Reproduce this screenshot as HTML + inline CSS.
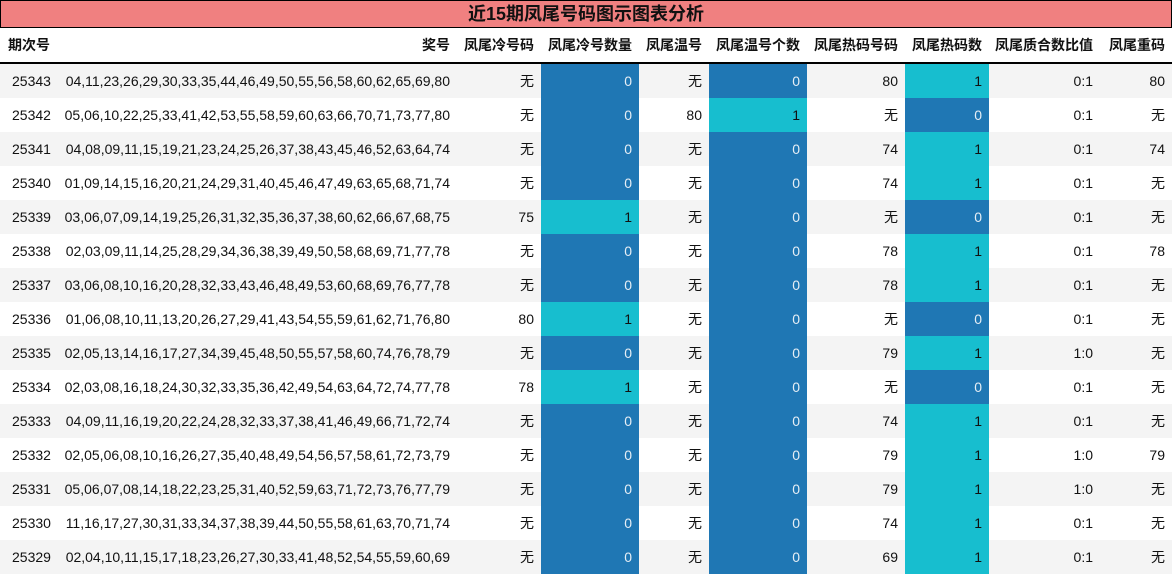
<!DOCTYPE html>
<html><head><meta charset="utf-8">
<style>
html,body{margin:0;padding:0;background:#fff;width:1172px;height:575px;overflow:hidden;}
body{font-family:"Liberation Sans","Noto Sans CJK SC",sans-serif;font-size:14px;color:#111;}
.title{box-sizing:border-box;height:28px;background:#f08080;border:1px solid #000;text-align:center;font-weight:bold;font-size:18px;line-height:26px;}
table{border-collapse:collapse;table-layout:fixed;width:1172px;}
th{height:34px;font-weight:bold;text-align:right;padding:0 7px 0 0;border-bottom:2px solid #000;white-space:nowrap;}
th:first-child{text-align:left;padding-left:8px;}
td{height:34px;padding:0 7px 0 0;text-align:right;white-space:nowrap;}
td:first-child{text-align:left;padding-left:12px;}
td:nth-child(2),th:nth-child(2){padding-right:6px;}
tr:nth-child(odd) td{background:#f4f4f4;}
tr td.b{background:#1f77b4 !important;color:#e6eef5;}
tr td.c{background:#17becf !important;color:#111;}
</style></head><body>
<div class="title">近15期凤尾号码图示图表分析</div>
<table>
<colgroup><col style="width:58px"><col style="width:398px"><col style="width:85px"><col style="width:98px"><col style="width:70px"><col style="width:98px"><col style="width:98px"><col style="width:84px"><col style="width:111px"><col style="width:72px"></colgroup>
<thead><tr><th>期次号</th><th>奖号</th><th>凤尾冷号码</th><th>凤尾冷号数量</th><th>凤尾温号</th><th>凤尾温号个数</th><th>凤尾热码号码</th><th>凤尾热码数</th><th>凤尾质合数比值</th><th>凤尾重码</th></tr></thead>
<tbody>
<tr><td>25343</td><td>04,11,23,26,29,30,33,35,44,46,49,50,55,56,58,60,62,65,69,80</td><td>无</td><td class="b">0</td><td>无</td><td class="b">0</td><td>80</td><td class="c">1</td><td>0:1</td><td>80</td></tr>
<tr><td>25342</td><td>05,06,10,22,25,33,41,42,53,55,58,59,60,63,66,70,71,73,77,80</td><td>无</td><td class="b">0</td><td>80</td><td class="c">1</td><td>无</td><td class="b">0</td><td>0:1</td><td>无</td></tr>
<tr><td>25341</td><td>04,08,09,11,15,19,21,23,24,25,26,37,38,43,45,46,52,63,64,74</td><td>无</td><td class="b">0</td><td>无</td><td class="b">0</td><td>74</td><td class="c">1</td><td>0:1</td><td>74</td></tr>
<tr><td>25340</td><td>01,09,14,15,16,20,21,24,29,31,40,45,46,47,49,63,65,68,71,74</td><td>无</td><td class="b">0</td><td>无</td><td class="b">0</td><td>74</td><td class="c">1</td><td>0:1</td><td>无</td></tr>
<tr><td>25339</td><td>03,06,07,09,14,19,25,26,31,32,35,36,37,38,60,62,66,67,68,75</td><td>75</td><td class="c">1</td><td>无</td><td class="b">0</td><td>无</td><td class="b">0</td><td>0:1</td><td>无</td></tr>
<tr><td>25338</td><td>02,03,09,11,14,25,28,29,34,36,38,39,49,50,58,68,69,71,77,78</td><td>无</td><td class="b">0</td><td>无</td><td class="b">0</td><td>78</td><td class="c">1</td><td>0:1</td><td>78</td></tr>
<tr><td>25337</td><td>03,06,08,10,16,20,28,32,33,43,46,48,49,53,60,68,69,76,77,78</td><td>无</td><td class="b">0</td><td>无</td><td class="b">0</td><td>78</td><td class="c">1</td><td>0:1</td><td>无</td></tr>
<tr><td>25336</td><td>01,06,08,10,11,13,20,26,27,29,41,43,54,55,59,61,62,71,76,80</td><td>80</td><td class="c">1</td><td>无</td><td class="b">0</td><td>无</td><td class="b">0</td><td>0:1</td><td>无</td></tr>
<tr><td>25335</td><td>02,05,13,14,16,17,27,34,39,45,48,50,55,57,58,60,74,76,78,79</td><td>无</td><td class="b">0</td><td>无</td><td class="b">0</td><td>79</td><td class="c">1</td><td>1:0</td><td>无</td></tr>
<tr><td>25334</td><td>02,03,08,16,18,24,30,32,33,35,36,42,49,54,63,64,72,74,77,78</td><td>78</td><td class="c">1</td><td>无</td><td class="b">0</td><td>无</td><td class="b">0</td><td>0:1</td><td>无</td></tr>
<tr><td>25333</td><td>04,09,11,16,19,20,22,24,28,32,33,37,38,41,46,49,66,71,72,74</td><td>无</td><td class="b">0</td><td>无</td><td class="b">0</td><td>74</td><td class="c">1</td><td>0:1</td><td>无</td></tr>
<tr><td>25332</td><td>02,05,06,08,10,16,26,27,35,40,48,49,54,56,57,58,61,72,73,79</td><td>无</td><td class="b">0</td><td>无</td><td class="b">0</td><td>79</td><td class="c">1</td><td>1:0</td><td>79</td></tr>
<tr><td>25331</td><td>05,06,07,08,14,18,22,23,25,31,40,52,59,63,71,72,73,76,77,79</td><td>无</td><td class="b">0</td><td>无</td><td class="b">0</td><td>79</td><td class="c">1</td><td>1:0</td><td>无</td></tr>
<tr><td>25330</td><td>11,16,17,27,30,31,33,34,37,38,39,44,50,55,58,61,63,70,71,74</td><td>无</td><td class="b">0</td><td>无</td><td class="b">0</td><td>74</td><td class="c">1</td><td>0:1</td><td>无</td></tr>
<tr><td>25329</td><td>02,04,10,11,15,17,18,23,26,27,30,33,41,48,52,54,55,59,60,69</td><td>无</td><td class="b">0</td><td>无</td><td class="b">0</td><td>69</td><td class="c">1</td><td>0:1</td><td>无</td></tr>
</tbody></table>
</body></html>
